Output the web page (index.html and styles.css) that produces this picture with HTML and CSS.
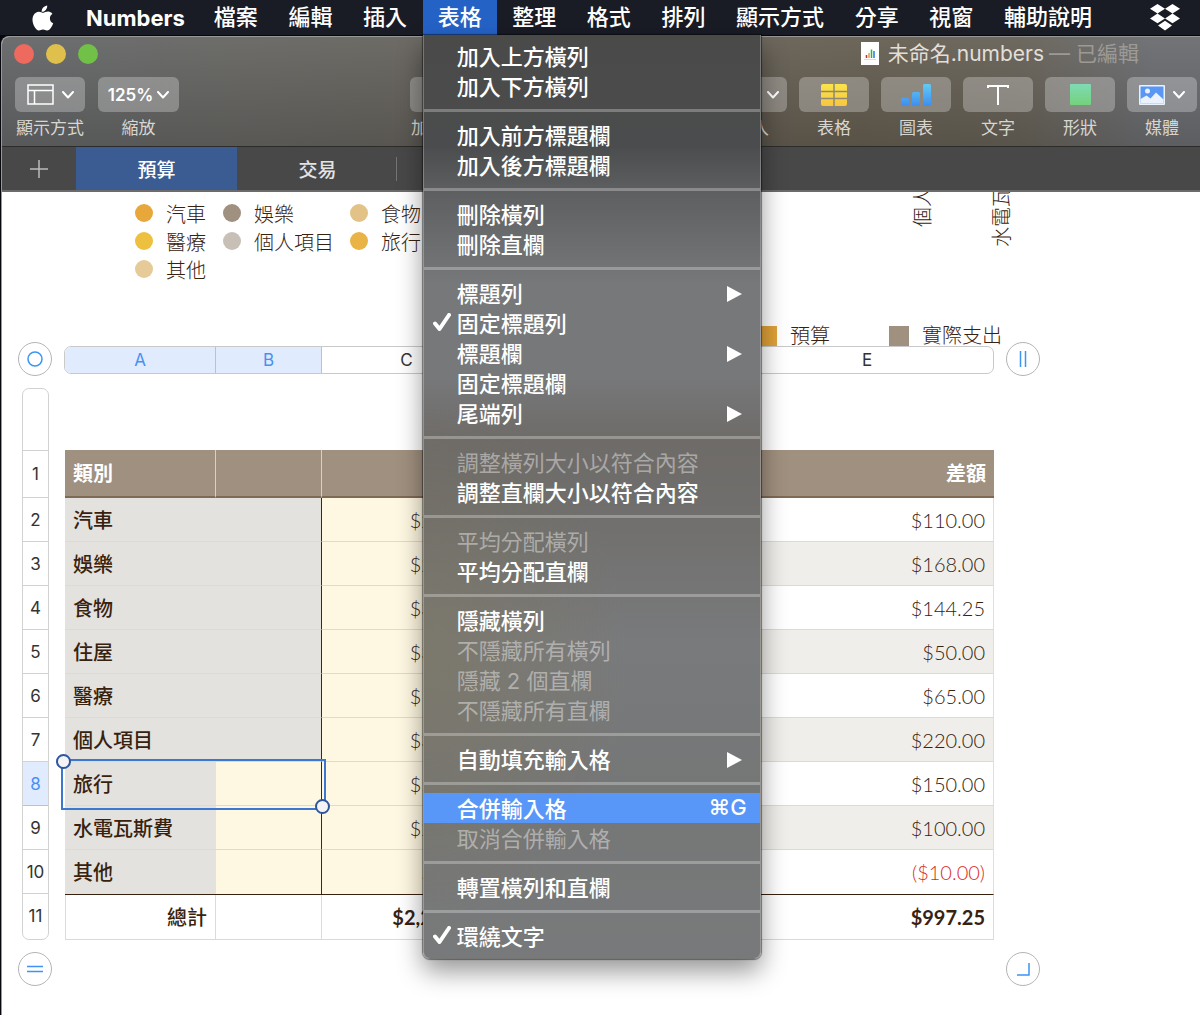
FILE: index.html
```html
<!DOCTYPE html>
<html lang="zh-Hant">
<head>
<meta charset="UTF-8" />
<meta name="viewport" content="width=device-width, initial-scale=1" />
<title>未命名.numbers</title>
<link rel="stylesheet" href="styles.css">
</head>
<body>

<header class="menubar">
  <button class="apple" aria-label="Apple">
    <svg width="22" height="26" viewBox="0 0 22 26" fill="#fff">
      <path d="M15.2 0.4c.2 1.7-.5 3.300-1.500 4.500-1 1.200-2.500 2-4 1.900-.2-1.600.6-3.300 1.500-4.300 1.100-1.200 2.700-2 4-2.100z"/>
      <path d="M20.400 9c-1.600 1-2.500 2.500-2.500 4.400 0 2.200 1.200 4 3.300 4.900-.5 1.500-1.200 2.900-2.100 4.200-1.200 1.700-2.400 3-4.100 3-1.600 0-2.200-1-4-1-1.900 0-2.500 1-4 1-1.700.1-3-1.500-4.200-3.200C.500 19 -.4 13.500 1.500 10.200 2.700 8 4.800 6.700 7 6.700c1.700 0 3.100 1.100 4.300 1.100 1 0 2.900-1.300 5-1.200 1.500.1 3.100.8 4.100 2.400z"/>
    </svg>
  </button>
  <button class="app-name">Numbers</button>
  <nav class="menus">
    <button class="menu-title">檔案</button>
    <button class="menu-title">編輯</button>
    <button class="menu-title">插入</button>
    <div class="menu-open">
      <button class="menu-title active" aria-expanded="true">表格</button>
      <div class="menu" role="menu">
        <button class="item">加入上方橫列</button>
        <button class="item">加入下方橫列</button>
        <hr>
        <button class="item">加入前方標題欄</button>
        <button class="item">加入後方標題欄</button>
        <hr>
        <button class="item">刪除橫列</button>
        <button class="item">刪除直欄</button>
        <hr>
        <button class="item">標題列<svg class="arrow" viewBox="0 0 15 16"><path d="M0 0L15 8L0 16z"/></svg></button>
        <button class="item checked"><svg class="check" viewBox="0 0 18 18"><path d="M2 10.500L6.500 16L16 2"/></svg>固定標題列</button>
        <button class="item">標題欄<svg class="arrow" viewBox="0 0 15 16"><path d="M0 0L15 8L0 16z"/></svg></button>
        <button class="item">固定標題欄</button>
        <button class="item">尾端列<svg class="arrow" viewBox="0 0 15 16"><path d="M0 0L15 8L0 16z"/></svg></button>
        <hr>
        <button class="item" disabled>調整橫列大小以符合內容</button>
        <button class="item">調整直欄大小以符合內容</button>
        <hr>
        <button class="item" disabled>平均分配橫列</button>
        <button class="item">平均分配直欄</button>
        <hr>
        <button class="item">隱藏橫列</button>
        <button class="item" disabled>不隱藏所有橫列</button>
        <button class="item" disabled>隱藏 2 個直欄</button>
        <button class="item" disabled>不隱藏所有直欄</button>
        <hr>
        <button class="item">自動填充輸入格<svg class="arrow" viewBox="0 0 15 16"><path d="M0 0L15 8L0 16z"/></svg></button>
        <hr>
        <button class="item selected">合併輸入格<span class="shortcut">⌘G</span></button>
        <button class="item" disabled>取消合併輸入格</button>
        <hr>
        <button class="item">轉置橫列和直欄</button>
        <hr>
        <button class="item checked"><svg class="check" viewBox="0 0 18 18"><path d="M2 10.500L6.500 16L16 2"/></svg>環繞文字</button>
      </div>
    </div>
    <button class="menu-title">整理</button>
    <button class="menu-title">格式</button>
    <button class="menu-title">排列</button>
    <button class="menu-title">顯示方式</button>
    <button class="menu-title">分享</button>
    <button class="menu-title">視窗</button>
    <button class="menu-title">輔助說明</button>
  </nav>
  <button class="dropbox" aria-label="Dropbox">
    <svg width="30" height="27" viewBox="0 0 30 27" fill="#fff">
      <path d="M7.500 0L15 4.800L7.500 9.600L0 4.800z M22.500 0L30 4.800L22.500 9.600L15 4.800z M7.500 9.600L15 14.400L7.500 19.200L0 14.400z M22.500 9.600L30 14.400L22.500 19.200L15 14.400z M15 16.800L22 21.500L15 26.500L8 21.500z"/>
    </svg>
  </button>
</header>

<main class="window">
  <div class="chrome">
    <div class="titlebar">
      <div class="lights">
        <button class="light close" aria-label="關閉"></button>
        <button class="light minimize" aria-label="縮到最小"></button>
        <button class="light zoom" aria-label="放大"></button>
      </div>
      <div class="title">
        <svg width="18" height="24" viewBox="0 0 18 24">
          <rect width="18" height="23" fill="#fff"/>
          <path d="M3 17.500h12" stroke="#ddd"/>
          <path d="M5.500 16v-3" stroke="#b33" stroke-width="1.500"/>
          <path d="M8 16v-5" stroke="#e94" stroke-width="1.500"/>
          <path d="M10.500 16V7.500" stroke="#2b3" stroke-width="1.500"/>
          <path d="M13 16V9" stroke="#27e" stroke-width="1.500"/>
        </svg>
        <span>未命名.numbers</span>
        <span class="edited">— 已編輯</span>
      </div>
    </div>

    <div class="toolbar">
      <div class="tool">
        <button id="view">
          <svg width="27" height="21" viewBox="0 0 27 21" fill="none" stroke="#fff" stroke-width="1.500">
            <path d="M1 1h25v19H1z M1 6.500h25 M7.500 6.500V20"/>
          </svg>
          <svg class="chevron" viewBox="0 0 12 8"><path d="M1 1l5 5.500L11 1"/></svg>
        </button>
        <label for="view">顯示方式</label>
      </div>
      <div class="tool wide">
        <button id="scale">125%<svg class="chevron" viewBox="0 0 12 8"><path d="M1 1l5 5.500L11 1"/></svg></button>
        <label for="scale">縮放</label>
      </div>
      <div class="tool category">
        <button id="category"></button>
        <label for="category">加入類別</label>
      </div>
      <div class="tools">
        <div class="tool">
          <button id="insert" class="end"><svg class="chevron" viewBox="0 0 12 8"><path d="M1 1l5 5.500L11 1"/></svg></button>
          <label for="insert">插入</label>
        </div>
        <div class="tool">
          <button id="table">
            <svg width="26" height="22" viewBox="0 0 26 22">
              <defs><linearGradient id="gold" x2="0" y2="1"><stop stop-color="#fbe44b"/><stop offset="1" stop-color="#f7c640"/></linearGradient></defs>
              <rect width="26" height="22" rx="2" fill="url(#gold)"/>
              <path d="M13 0v22 M0 7.500h26 M0 14.500h26" stroke="#8e8876" stroke-width="1.500"/>
            </svg>
          </button>
          <label for="table">表格</label>
        </div>
        <div class="tool">
          <button id="chart">
            <svg width="30" height="22" viewBox="0 0 30 22">
              <defs><linearGradient id="sky" gradientUnits="userSpaceOnUse" x1="0" y1="0" x2="0" y2="22"><stop stop-color="#62cbf4"/><stop offset="1" stop-color="#3d8df0"/></linearGradient></defs>
              <g fill="url(#sky)"><rect y="14" width="8" height="8" rx="1.500"/><rect x="11" y="8" width="8" height="14" rx="1.500"/><rect x="22" width="8" height="22" rx="1.500"/></g>
            </svg>
          </button>
          <label for="chart">圖表</label>
        </div>
        <div class="tool">
          <button id="text">
            <svg width="22" height="22" viewBox="0 0 22 22" fill="none" stroke="#fff" stroke-width="2"><path d="M1 4V2h20v2 M11 2v19"/></svg>
          </button>
          <label for="text">文字</label>
        </div>
        <div class="tool">
          <button id="shape">
            <svg width="21" height="21" viewBox="0 0 21 21">
              <defs><linearGradient id="mint" x2="0" y2="1"><stop stop-color="#7fdbb4"/><stop offset="1" stop-color="#74d17b"/></linearGradient></defs>
              <rect width="21" height="21" rx="1" fill="url(#mint)"/>
            </svg>
          </button>
          <label for="shape">形狀</label>
        </div>
        <div class="tool">
          <button id="media">
            <svg width="26" height="20" viewBox="0 0 26 20">
              <rect width="26" height="20" rx="1" fill="#e9f2fd"/>
              <rect x="1.500" y="1.500" width="23" height="17" fill="#5a97f5"/>
              <path d="M1.500 14l6-3.500 4 3 5.500-6 7.500 7v4h-23z" fill="#e9f2fd"/>
              <circle cx="8.500" cy="6" r="2.500" fill="#e9f2fd"/>
            </svg>
            <svg class="chevron" viewBox="0 0 12 8"><path d="M1 1l5 5.500L11 1"/></svg>
          </button>
          <label for="media">媒體</label>
        </div>
      </div>
    </div>
  </div>

  <div class="tabs">
    <button class="add" aria-label="新增工作表">
      <svg width="18" height="18" viewBox="0 0 18 18" stroke="#bbb" stroke-width="1.500"><path d="M9 0v18 M0 9h18"/></svg>
    </button>
    <button class="tab active">預算</button>
    <button class="tab">交易</button>
  </div>

  <section class="canvas">
    <div class="charts">
      <ul class="pie-legend">
        <li><i class="dot auto"></i>汽車</li>
        <li><i class="dot fun"></i>娛樂</li>
        <li><i class="dot food"></i>食物</li>
        <li><i class="dot medical"></i>醫療</li>
        <li><i class="dot personal"></i>個人項目</li>
        <li><i class="dot travel"></i>旅行</li>
        <li><i class="dot other"></i>其他</li>
      </ul>
      <div class="bar-chart">
        <div class="axis">
          <span>個人項目</span>
          <span>水電瓦斯費</span>
        </div>
        <ul class="bar-legend">
          <li><i class="square budget"></i>預算</li>
          <li><i class="square actual"></i>實際支出</li>
        </ul>
      </div>
    </div>

    <div class="sheet">
      <button class="handle" aria-label="表格"><svg viewBox="0 0 16 16"><circle cx="8" cy="8" r="7"/></svg></button>
      <div class="columns">
        <button class="col-a on">A</button>
        <button class="col-b on">B</button>
        <button class="col-c">C</button>
        <button class="col-d">D</button>
        <button class="col-e">E</button>
      </div>
      <button class="handle" aria-label="加入直欄"><svg viewBox="0 0 16 16"><path d="M5.500 0v16 M10.500 0v16"/></svg></button>

      <div class="rows">
        <button class="blank" aria-label="表格名稱"></button>
        <button class="first">1</button>
        <button>2</button>
        <button>3</button>
        <button>4</button>
        <button>5</button>
        <button>6</button>
        <button>7</button>
        <button class="on">8</button>
        <button>9</button>
        <button>10</button>
        <button>11</button>
      </div>
      <table class="budget-table">
        <colgroup><col class="col-a"><col class="col-b"><col class="col-c"><col><col class="col-e"></colgroup>
        <thead>
          <tr><th>類別</th><th></th><th class="num">預算</th><th class="num">實際支出</th><th class="num">差額</th></tr>
        </thead>
        <tbody>
          <tr><th colspan="2">汽車</th><td class="input">$200.00</td><td>$90.00</td><td>$110.00</td></tr>
          <tr><th colspan="2">娛樂</th><td class="input">$200.00</td><td>$32.00</td><td>$168.00</td></tr>
          <tr><th colspan="2">食物</th><td class="input">$350.00</td><td>$205.75</td><td>$144.25</td></tr>
          <tr><th colspan="2">住屋</th><td class="input">$300.00</td><td>$250.00</td><td>$50.00</td></tr>
          <tr><th colspan="2">醫療</th><td class="input">$100.00</td><td>$35.00</td><td>$65.00</td></tr>
          <tr><th colspan="2">個人項目</th><td class="input">$300.00</td><td>$80.00</td><td>$220.00</td></tr>
          <tr><th class="anchor">旅行<span class="selection"></span></th><td class="input last"></td><td class="input">$500.00</td><td>$350.00</td><td>$150.00</td></tr>
          <tr><th>水電瓦斯費</th><td class="input last"></td><td class="input">$200.00</td><td>$100.00</td><td>$100.00</td></tr>
          <tr><th>其他</th><td class="input last"></td><td class="input">$50.00</td><td>$60.00</td><td class="negative">($10.00)</td></tr>
        </tbody>
        <tfoot>
          <tr><th>總計</th><td></td><td>$2,200.00</td><td>$1,202.75</td><td>$997.25</td></tr>
        </tfoot>
      </table>

      <button class="handle bottom" aria-label="加入橫列"><svg viewBox="0 0 16 16"><path d="M0 5.500h16 M0 10.500h16"/></svg></button>
      <button class="handle corner" aria-label="調整表格大小"><svg viewBox="0 0 16 16"><path d="M2 14h12V2"/></svg></button>
    </div>
  </section>
</main>

</body>
</html>
```

FILE: styles.css
```css
* {
  box-sizing: border-box;
}
body {
  margin: 0;
  min-height: 100vh;
  display: flex;
  flex-direction: column;
  background: #06080d;
  font-family: Inter, "Noto Sans CJK TC", sans-serif;
  font-size: 22px;
  color: #fff;
}
button {
  font: inherit;
  color: inherit;
  background: none;
  border: none;
  padding: 0;
  white-space: nowrap;
}
ul {
  list-style: none;
  margin: 0;
  padding: 0;
}

/* menu bar */
.menubar {
  display: flex;
  align-items: center;
  height: 35px;
  padding: 0 20px 0 32px;
  background: #191b25;
  position: relative;
  z-index: 2;
}
.apple, .dropbox {
  display: flex;
}
.app-name {
  font-weight: 700;
  line-height: 32px;
  margin-left: 32px;
}
.menus {
  flex: 1;
  display: flex;
  justify-content: space-between;
  margin: 0 43px 0 14px;
}
.menu-title {
  height: 35px;
  padding: 0 15px 2px;
  line-height: 32px;
  font-weight: 500;
}
.menu-title.active {
  background: #2562c6;
}
.menu-open {
  position: relative;
}
.menu {
  position: absolute;
  top: 35px;
  left: 0;
  width: 338px;
  padding: 6px 0 7px;
  border: 1px solid rgba(255, 255, 255, 0.25);
  border-top: none;
  border-radius: 0 0 7px 7px;
  background:
    radial-gradient(ellipse 60% 28% at 0 68%, rgba(128, 118, 84, 0.4), transparent),
    linear-gradient(#4a4a49, #4b4c4d 12%, #5e5f61 17%, #77787a 27%, #77787a 37%, #6e6b68 44%, #706f6d 52%, #797a7c 66%, #757676 82%, #78797a);
  box-shadow: 0 0 1px 1px rgba(0, 0, 0, 0.45), 0 12px 26px rgba(0, 0, 0, 0.42);
}
.menu hr {
  height: 3px;
  margin: 8px 0;
  border: none;
  background: rgba(255, 255, 255, 0.28);
}
.item {
  display: flex;
  align-items: center;
  width: 100%;
  height: 30px;
  padding: 0 13px 3px 33px;
  font-weight: 500;
}
.item:disabled {
  color: rgba(255, 255, 255, 0.42);
  font-weight: 400;
}
.item.selected {
  background: #5896f8;
}
.item.checked {
  padding-left: 9px;
}
.arrow {
  width: 15px;
  height: 16px;
  margin: 4px 5px 0 auto;
  fill: #fff;
}
.check {
  width: 18px;
  height: 18px;
  margin-right: 6px;
  fill: none;
  stroke: #fff;
  stroke-width: 4;
  stroke-linecap: round;
  stroke-linejoin: round;
}
.shortcut {
  margin-left: auto;
}

/* window */
.window {
  flex: 1;
  display: flex;
  flex-direction: column;
  margin: 1px 0 0 1px;
  border: solid #989896;
  border-width: 1px 0 0 1px;
  border-radius: 8px 0 0 0;
  overflow: hidden;
  background: #fff;
}
.chrome {
  height: 110px;
  background:
    linear-gradient(rgba(255, 255, 255, 0.06), rgba(0, 0, 0, 0.12)),
    linear-gradient(to right, #636567, #646461 18%, #646058 45%, #645d50 72%, #656056 85%, #696b6f 96%);
  border-bottom: 1px solid #2c2c2a;
}
.titlebar {
  display: flex;
  align-items: center;
  justify-content: space-between;
  height: 34px;
  padding: 0 61px 0 12px;
}
.lights {
  display: flex;
  gap: 12px;
}
.light {
  width: 20px;
  height: 20px;
  border-radius: 50%;
}
.close { background: #ee6a5f; }
.minimize { background: #e0c04c; }
.zoom { background: #71c048; }
.title {
  display: flex;
  align-items: center;
  gap: 9px;
  font-size: 21px;
  line-height: 32px;
  color: #e2dfd8;
}
.edited {
  margin-left: -4px;
  color: #9c9a95;
}
.toolbar {
  display: flex;
  padding: 6px 3px 0 13px;
}
.tools {
  display: flex;
  gap: 12px;
  margin-left: auto;
}
.tool {
  display: flex;
  flex-direction: column;
  align-items: center;
  width: 70px;
}
.tool.wide {
  width: 81px;
  margin-left: 13px;
}
.tool.category {
  margin-left: 231px;
}
.tool button {
  display: flex;
  align-items: center;
  justify-content: center;
  gap: 8px;
  width: 100%;
  height: 35px;
  border-radius: 6px;
  background: rgba(255, 255, 255, 0.27);
  font-size: 17px;
  font-weight: 600;
}
.tool.wide button {
  gap: 4px;
}
.tool .end {
  justify-content: flex-end;
  padding-right: 8px;
}
.tool label {
  margin-top: 4px;
  font-size: 17px;
  line-height: 24px;
  white-space: nowrap;
  color: #d8d6d1;
}
.chevron {
  width: 12px;
  height: 8px;
  fill: none;
  stroke: #fff;
  stroke-width: 2;
  stroke-linecap: round;
  stroke-linejoin: round;
}

/* sheet tabs */
.tabs {
  display: flex;
  height: 45px;
  background: #484848;
  border-bottom: 2px solid #6b6b6b;
}
.add {
  display: flex;
  align-items: center;
  justify-content: center;
  width: 74px;
}
.tab {
  position: relative;
  width: 161px;
  font-size: 19px;
  font-weight: 500;
  color: #e4e4e4;
}
.tab.active {
  background: #3b5c93;
  color: #fff;
}
.tab:last-child::after {
  content: "";
  position: absolute;
  top: 10px;
  right: 1px;
  height: 24px;
  border-right: 1px solid #757575;
}

/* canvas */
.canvas {
  flex: 1;
  overflow: hidden;
  font-size: 20px;
  color: #38220f;
}
.charts {
  display: flex;
  justify-content: space-between;
  min-height: 154px;
  padding: 0 198px 0 133px;
  font-weight: 300;
}
.pie-legend {
  display: grid;
  grid-template-columns: 88px 127px auto;
  grid-auto-rows: 28px;
  padding-top: 7px;
}
.pie-legend li, .bar-legend li {
  display: flex;
  align-items: center;
  gap: 13px;
  white-space: nowrap;
}
.dot {
  width: 18px;
  height: 18px;
  border-radius: 50%;
}
.square {
  width: 20px;
  height: 20px;
}
.auto { background: #e8a73a; }
.fun { background: #a0907f; }
.food { background: #e2c287; }
.medical { background: #edc03f; }
.personal { background: #c8bfb6; }
.travel { background: #eab345; }
.other { background: #e6ca97; }
.budget { background: #dfa238; }
.actual { background: #a0907f; }
.bar-chart {
  display: flex;
  flex-direction: column;
  justify-content: space-between;
}
.axis {
  display: flex;
  align-items: flex-start;
  justify-content: flex-end;
  gap: 59px;
  margin: -45px -10px 0 0;
}
.axis span {
  writing-mode: vertical-rl;
  text-orientation: sideways;
  transform: rotate(180deg);
  line-height: 20px;
}
.bar-legend {
  display: flex;
  gap: 59px;
  line-height: 20px;
}

/* table with its row and column headers */
.sheet {
  display: grid;
  grid-template-columns: 34px 1fr 34px;
  gap: 12px;
  margin-top: -4px;
  padding: 0 160px 28px 16px;
}
.handle {
  display: flex;
  align-items: center;
  justify-content: center;
  width: 34px;
  height: 34px;
  border: 1px solid #b4b4b4;
  border-radius: 50%;
  background: #fff;
}
.handle svg {
  width: 16px;
  height: 16px;
  fill: none;
  stroke: #3d94f2;
  stroke-width: 1.5;
}
.corner {
  grid-column: 3;
}
.columns {
  display: flex;
  align-self: center;
  height: 28px;
  margin-top: 2px;
  border: 1px solid #c9c9c9;
  border-radius: 7px;
  overflow: hidden;
  font-size: 17px;
  background: #fff;
  color: #333;
}
.columns button {
  border-right: 1px solid #c9c9c9;
}
.columns .col-d {
  flex: 1;
}
.columns .col-e {
  border-right: none;
}
.col-a { width: 151px; }
.col-b { width: 106px; }
.col-c { width: 170px; }
.col-e { width: 252px; }
.columns .on, .rows .on {
  background: #e0ecfd;
  border-color: #b0c4de;
  color: #4a90f2;
}
.rows {
  display: flex;
  flex-direction: column;
  width: 27px;
  margin-left: 4px;
  border: 1px solid #d2d2d2;
  border-radius: 7px;
  overflow: hidden;
  font-size: 17px;
  color: #333;
}
.rows button {
  height: 44px;
  border-bottom: 1px solid #d2d2d2;
}
.rows .blank {
  height: 62px;
}
.rows .first {
  height: 47px;
}
.rows button:last-child {
  border-bottom: none;
}
.budget-table {
  grid-column: 2 / 4;
  width: calc(100% - 47px);
  margin: 62px 0 0 1px;
  table-layout: fixed;
  border-collapse: separate;
  border-spacing: 0;
  font-family: Lato, "Noto Sans CJK TC", sans-serif;
}
.budget-table th, .budget-table td {
  height: 44px;
  padding: 0 8px;
  border-bottom: 1px solid #dcdad6;
  line-height: 24px;
  text-align: right;
}
.budget-table td {
  font-weight: 300;
}
.budget-table th {
  font-weight: 500;
  text-align: left;
}
.budget-table thead th {
  height: 48px;
  background: #a0907f;
  border-right: 1px solid #d8d0c8;
  border-bottom: 2px solid #7f6a56;
  color: #fff;
  font-weight: 700;
}
.budget-table thead .num {
  text-align: right;
}
.budget-table thead th:last-child {
  border-right: none;
}
.budget-table tbody th {
  background: #e3e2de;
}
.budget-table tbody th[colspan], .budget-table .last {
  border-right: 1px solid #3e2812;
}
.budget-table tbody td:last-child {
  border-right: 1px solid #e2dfdb;
}
.budget-table tbody tr:nth-child(even) td {
  background: #f0eeeb;
}
.budget-table tbody tr .input, .budget-table tbody tr:nth-child(even) .input {
  background: #fef7e1;
}
.budget-table tbody tr:last-child > * {
  height: 45px;
  border-bottom: 1px solid #38200f;
}
.budget-table .negative {
  color: #dc2a1e;
}
.budget-table tfoot th, .budget-table tfoot td {
  height: 45px;
  border-right: 1px solid #dedad5;
  font-weight: 700;
}
.budget-table tfoot th {
  border-left: 1px solid #dedad5;
  font-weight: 500;
  text-align: right;
}
.anchor {
  position: relative;
}

/* selected cells A8:B8 */
.selection {
  position: absolute;
  z-index: 1;
  top: -3px;
  left: -4px;
  width: 265px;
  height: 51px;
  border: 2px solid #3c78d0;
}
.selection::before, .selection::after {
  content: "";
  position: absolute;
  width: 11px;
  height: 11px;
  border: 2px solid #2f569f;
  border-radius: 50%;
  background: #f4f4f4;
}
.selection::before {
  top: -7px;
  left: -7px;
}
.selection::after {
  right: -6px;
  bottom: -6px;
}
```
